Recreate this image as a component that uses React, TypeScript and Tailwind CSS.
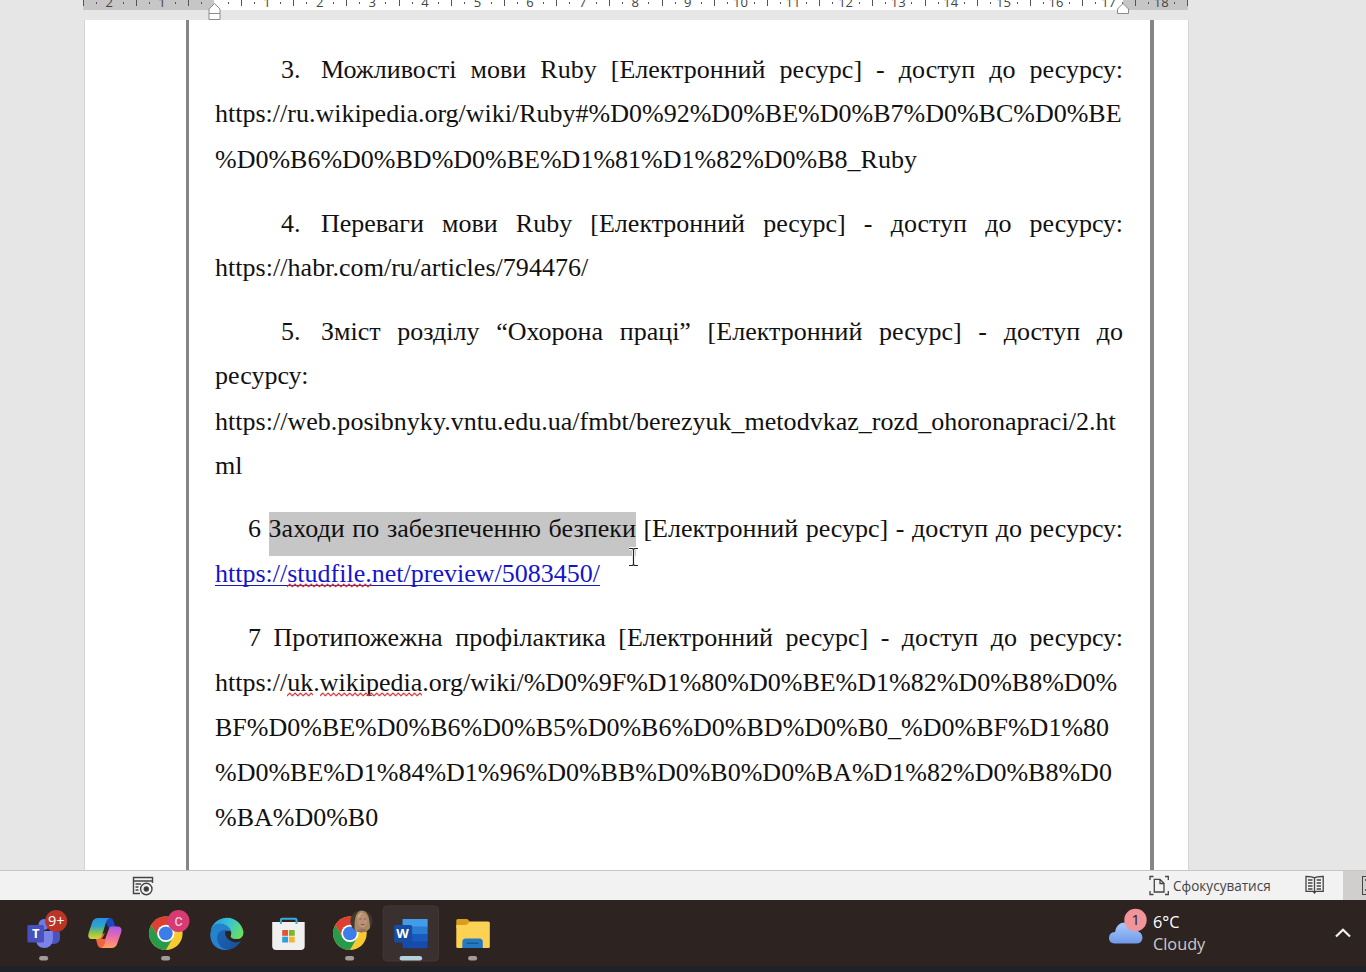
import type { ReactNode } from "react";

const rulerCells = Array.from({ length: 21 }, (_, i) => i - 2);

function Ruler() {
  return (
    <div className="relative ml-[83px] h-[10px] w-[1105px] overflow-hidden bg-[#c6c6c6]">
      <div className="ml-[131px] h-[10px] w-[909px] bg-white" />
      <div className="absolute left-0 top-0 flex h-[10px]">
        {rulerCells.map((n) => (
          <div key={n} className="relative flex w-[52.6px] shrink-0 justify-center">
            <i className="absolute left-0 top-0 h-[6px] w-px bg-[#555]" />
            <i className="absolute left-[13px] top-[2px] h-[2px] w-px bg-[#555]" />
            <i className="absolute left-[39.5px] top-[2px] h-[2px] w-px bg-[#555]" />
            <span className="-mt-[6px] font-['Open_Sans',sans-serif] text-[13px] leading-[17px] text-[#444]">
              {n === 0 ? "" : Math.abs(n)}
            </span>
          </div>
        ))}
      </div>
      <i className="absolute right-0 top-0 h-[6px] w-px bg-[#555]" />
    </div>
  );
}

function Squiggle({ children }: { children: ReactNode }) {
  return (
    <span className="relative inline-block">
      {children}
      <svg className="absolute left-0 top-[31.5px] h-[5px] w-full overflow-hidden">
        <defs>
          <pattern id="wave" width="5.4" height="5" patternUnits="userSpaceOnUse">
            <path d="M-1 4.7 L0 3.8 L2.7 1 L5.4 3.8 L6.4 4.7" fill="none" stroke="#cf3038" strokeWidth="1.2" />
          </pattern>
        </defs>
        <rect width="100%" height="5" fill="url(#wave)" />
      </svg>
    </span>
  );
}

function Line({ height = "h-[45px]", children }: { height?: string; children: ReactNode }) {
  return <div className={`${height} whitespace-nowrap`}>{children}</div>;
}

function Numbered({ n, children }: { n: string; children: ReactNode }) {
  return (
    <div className="flex h-[44px] pl-[66px]">
      <span className="w-[40px] shrink-0">{n}</span>
      <span className="grow [text-align-last:justify]">{children}</span>
    </div>
  );
}

function Indented({ children }: { children: ReactNode }) {
  return <div className="h-[45px] pl-[33px] [text-align-last:justify]">{children}</div>;
}

function Cell({ index, active, children }: { index: number; active?: boolean; children: ReactNode }) {
  const x = 12.6 + 61.3 * index;
  const cx = x + 30.65;
  return (
    <svg className="h-[66px] w-[61.3px] shrink-0" viewBox={`${x} 900 61.3 66`}>
      {active && <rect x="383.5" y="906" width="55.5" height="55" rx="4" fill="#3a302f" stroke="#423837" />}
      {children}
      {active && <rect x="400" y="956" width="22.5" height="4.4" rx="2.2" fill="#b4d2dc" />}
      {!active && [0, 2, 5, 7].includes(index) && (
        <rect x={cx - 4.5} y="956" width="9" height="4.4" rx="2.2" fill="#a39b99" />
      )}
    </svg>
  );
}

function Chrome({ cx }: { cx: number }) {
  return (
    <g transform={`translate(${cx} 933.3)`}>
      <circle r="16.8" fill="#f9c930" />
      <path d="M-14.55 -8.4 A16.8 16.8 0 0 1 14.55 -8.4 L0 -8.4 L-7.3 4.2 Z" fill="#db4033" />
      <path d="M-14.55 -8.4 A16.8 16.8 0 0 0 0 16.8 L7.3 4.2 L-7.3 4.2 Z" fill="#279a4b" />
      <circle r="8.6" fill="#fff" />
      <circle r="6.9" fill="#3d7de8" />
    </g>
  );
}

function Taskbar() {
  return (
    <div className="flex h-[66px] justify-between bg-[#2d2321] pl-[12.6px]">
      <div className="flex">
        <Cell index={0}>
          <circle cx="53" cy="928" r="4" fill="#5059c9" />
          <path d="M48 932 H59.5 V940 Q58 944 53 944 H48Z" fill="#4b53bc" />
          <circle cx="43.5" cy="924.5" r="5.4" fill="#6f7be0" />
          <path d="M35.5 931 H52.5 V940 Q51 948 44 948 Q36.5 948 35.5 940Z" fill="#7b83eb" />
          <rect x="27" y="925" width="16.6" height="17.4" rx="1.5" fill="#4850bd" />
          <text x="35.3" y="938.4" textAnchor="middle" fontFamily="Open Sans" fontWeight="700" fontSize="13" fill="#fff">T</text>
          <circle cx="55.8" cy="921" r="11" fill="#b83528" />
          <text x="55.9" y="926" textAnchor="middle" fontFamily="Open Sans" fontSize="14.5" fill="#fff">9+</text>
        </Cell>
        <Cell index={1}>
          <defs>
            <linearGradient id="cpL" x1="0" y1="0" x2="0" y2="1">
              <stop offset="0" stopColor="#278fe5" />
              <stop offset=".4" stopColor="#30a6c8" />
              <stop offset=".7" stopColor="#8cc44b" />
              <stop offset="1" stopColor="#ddd32f" />
            </linearGradient>
            <linearGradient id="cpR" x1=".4" y1="0" x2=".3" y2="1">
              <stop offset="0" stopColor="#b05be5" />
              <stop offset=".5" stopColor="#ed6fa5" />
              <stop offset="1" stopColor="#ffa45b" />
            </linearGradient>
          </defs>
          <path d="M104 918 H109.5 Q112.5 918 113.4 921 L115 926 H118 L109 929Z" fill="#1b49c2" />
          <path d="M95.5 938 L97.5 945 Q98.5 948 101.5 948 H105 L110 930Z" fill="#f0643f" />
          <path d="M98 918 H110 Q107 918.5 106 922 L102 935 Q100.8 939 97 939 H91.5 Q87.2 939 88.4 933.5 L92 922.5 Q93.5 918 98 918Z" fill="url(#cpL)" />
          <path d="M111.5 926.5 H117 Q122.6 926.5 121.2 932 L117 944 Q115.5 948 111.5 948 H101 Q103.5 947 104.5 944 L107.5 931 Q108.5 926.5 111.5 926.5Z" fill="url(#cpR)" />
          <path d="M107.2 927.5 H109.4 L105 939 H101.5 Q103 937 103.8 935Z" fill="#2d2321" />
        </Cell>
        <Cell index={2}>
          <Chrome cx={166} />
          <circle cx="178.7" cy="921" r="11" fill="#d63b72" />
          <text x="178.7" y="925.8" textAnchor="middle" fontFamily="Roboto" fontWeight="500" fontSize="12.5" fill="#f5c5d7">C</text>
        </Cell>
        <Cell index={3}>
          <defs>
            <linearGradient id="edTop" x1="0" y1=".2" x2="1" y2=".6">
              <stop offset="0" stopColor="#259bdc" />
              <stop offset=".5" stopColor="#39c4d3" />
              <stop offset="1" stopColor="#67df62" />
            </linearGradient>
            <linearGradient id="edBot" x1="0" y1="0" x2="1" y2="1">
              <stop offset="0" stopColor="#1d67b3" />
              <stop offset="1" stopColor="#164f9c" />
            </linearGradient>
          </defs>
          <path d="M211 931 A16.8 16.8 0 0 1 244 932 Q244 940 235.5 939 Q230 938.5 231.5 935 Q233 930 226 925.5 Q216 921 211 931Z" fill="url(#edTop)" />
          <path d="M210.7 934 Q212 923.5 220 923.5 Q229 923.5 231.5 931 Q220 929 220.5 938 Q221 948 234 947.8 Q229 950 225 950 Q211 948.5 210.7 934Z" fill="#2383ce" />
          <path d="M227 929.5 Q217 930 217.5 939 Q219 949 229 949.6 Q237 948.5 241.5 941 Q236 944 230.5 940.5 Q223 936 227 929.5Z" fill="url(#edBot)" />
        </Cell>
        <Cell index={4}>
          <path d="M272 922 H304.5 V946 Q304.5 950 300.5 950 H276 Q272 950 272 946Z" fill="#f1f0f0" />
          <path d="M280.7 924 V920 Q280.7 918.8 282 918.8 H295 Q296.3 918.8 296.3 920 V924" fill="none" stroke="#39aede" strokeWidth="2" />
          <rect x="282" y="930" width="5.8" height="5.8" fill="#e35635" />
          <rect x="288.7" y="930" width="5.8" height="5.8" fill="#7fb52d" />
          <rect x="282" y="936.7" width="5.8" height="5.8" fill="#2ba0df" />
          <rect x="288.7" y="936.7" width="5.8" height="5.8" fill="#f3b72f" />
        </Cell>
        <Cell index={5}>
          <Chrome cx={350} />
          <clipPath id="face"><circle cx="361.5" cy="921.3" r="11" /></clipPath>
          <g clipPath="url(#face)">
            <rect x="350" y="910" width="24" height="24" fill="#40392f" />
            <path d="M355 934 Q353 911 362 910.5 Q371 911 370 934Z" fill="#a78a65" />
            <ellipse cx="362.5" cy="920.5" rx="5" ry="7.3" fill="#bd9077" />
            <path d="M357.5 919 Q358 913 363 912.5 Q360 915 357.5 919Z" fill="#d2b987" />
            <path d="M359.5 919 H361.5 M364 919 H366 M361 924.5 H364.5" stroke="#795146" strokeWidth=".9" />
            <path d="M357 931 Q362 926 369 931 V934 H357Z" fill="#9b715c" />
          </g>
        </Cell>
        <Cell index={6} active>
          <rect x="403" y="919" width="25" height="29.3" rx="1.5" fill="#184aab" />
          <path d="M403 919 H428 V927 H403Z" fill="#429de9" />
          <path d="M403 926.5 H428 V934 H403Z" fill="#2b7bd3" />
          <path d="M403 934 H428 V941.5 H403Z" fill="#185abd" />
          <rect x="394.5" y="925" width="18" height="17.4" rx="1.5" fill="#174ca3" />
          <text x="402.9" y="938.4" textAnchor="middle" fontFamily="Open Sans" fontWeight="700" fontSize="13" fill="#fff">W</text>
        </Cell>
        <Cell index={7}>
          <path d="M456 920.5 Q456 919 457.5 919 H467 L470 922 V928 H456Z" fill="#d99d20" />
          <path d="M456 925 H466 L470 921.5 H488 Q489.5 921.5 489.5 923 V947 Q489.5 948 488 948 H457.5 Q456 948 456 947Z" fill="#fbd254" />
          <path d="M462 948 V942 Q462 938.5 465.5 938.5 H479 Q482.5 938.5 482.5 942 V948Z" fill="#2479c2" />
          <path d="M466.5 943.3 H478" stroke="#155891" strokeWidth="1.3" />
        </Cell>
      </div>
      <div className="flex font-['Open_Sans',sans-serif] text-[16.3px] leading-[22px]">
        <svg className="mt-[8px] h-[38px] w-[40px]" viewBox="1108 908 40 38">
          <defs>
            <linearGradient id="cloud" x1="0" y1="0" x2="0" y2="1">
              <stop offset="0" stopColor="#a8cafa" />
              <stop offset="1" stopColor="#709ae9" />
            </linearGradient>
          </defs>
          <path d="M1114.5 943.5 Q1109 943 1109 938 Q1109 932.5 1115 932 Q1116.5 922.5 1125 922.5 Q1133 922.5 1135 930.5 Q1142.5 931.5 1142.5 938 Q1142 943.5 1136 943.5Z" fill="url(#cloud)" />
          <circle cx="1135.5" cy="920" r="11.2" fill="#f1959a" />
          <text x="1135.7" y="925" textAnchor="middle" fontFamily="Open Sans" fontSize="14.5" fill="#291b1b">1</text>
        </svg>
        <div className="mr-[128px] mt-[11px] w-[58px] pl-[5px]">
          <div className="text-white">6°C</div>
          <div className="text-[#d0c9c7]">Cloudy</div>
        </div>
        <svg className="mr-[14px] mt-[27px] h-[12px] w-[18px]" viewBox="0 0 18 12" fill="none" stroke="#f4f1f0" strokeWidth="2.2">
          <path d="M2 9.5 L9 2.7 L16 9.5" />
        </svg>
      </div>
    </div>
  );
}

function StatusBar() {
  return (
    <div className="flex h-[30px] border-t border-[#c6c6c6] bg-[#f2f2f2]">
      <svg className="ml-[132px] mt-[5px] h-[20px] w-[22px] shrink-0" viewBox="132 876 22 20" fill="none" stroke="#444" strokeWidth="1.4">
        <path d="M140 893.5 H133.5 V877.5 H152.5 V883 M133.5 881 H152.5 M135.5 884 H141 M135.5 887 H138.5 M135.5 890 H138.5" />
        <circle cx="146.3" cy="889" r="5.7" fill="#f2f2f2" />
        <circle cx="146.3" cy="889" r="2" fill="#333" />
      </svg>
      <svg className="ml-[995px] mt-[4px] h-[22px] w-[21px] shrink-0" viewBox="1149 875 21 22" fill="none" stroke="#444" strokeWidth="1.3">
        <path d="M1153.5 876.5 H1150 V880 M1165 876.5 H1168.3 V880 M1150 891 V894.5 H1153.5 M1168.3 891 V894.5 H1165" />
        <path d="M1154.3 879.3 H1160 L1164 883.3 V892 H1154.3Z M1160 879.3 V883.5 H1164" />
      </svg>
      <span className="ml-[3px] w-[132px] shrink-0 pt-[6px] font-['Open_Sans',sans-serif] text-[13.55px] leading-[18px] text-[#444]">
        Сфокусуватися
      </span>
      <svg className="mt-[4px] h-[20px] w-[20px] shrink-0" viewBox="1305 875 20 20" fill="none" stroke="#444" strokeWidth="1.3">
        <path d="M1314.5 878 Q1312.5 876.4 1306 876.5 V891.3 H1313 L1314.5 893 L1316 891.3 H1323.2 V876.5 Q1316.5 876.4 1314.5 878 V892" />
        <path d="M1308 880 H1312.5 M1308 883 H1312.5 M1308 886 H1312.5 M1308 889 H1312.5 M1316.7 880 H1321 M1316.7 883 H1321 M1316.7 886 H1321 M1316.7 889 H1321" />
      </svg>
      <div className="ml-[18px] grow overflow-hidden bg-[#d1cfcd] pl-[19px] pt-[5px]">
        <div className="h-[19px] w-[14px] border-[1.5px] border-[#444] pl-[2px] pt-[2px]">
          <div className="h-[12px] w-[10px] border-y-2 border-[#666]" />
        </div>
      </div>
    </div>
  );
}

export default function App() {
  return (
    <div className="flex h-[972px] w-[1366px] flex-col overflow-hidden bg-[#e6e6e6]">
      <main className="relative h-[870px] shrink-0 overflow-hidden">
        <Ruler />
        <svg className="absolute left-[207px] top-[2px] h-[19px] w-[15px]" viewBox="0 0 15 19" fill="#fff" stroke="#8b8b8b">
          <path d="M2 11.5 V7 L7.5 1.5 L13 7 V11.5Z M2 11.5 H13 V17.5 H2Z" />
        </svg>
        <svg className="absolute left-[1115px] top-[2px] h-[13px] w-[15px]" viewBox="0 0 15 13" fill="#fff" stroke="#8b8b8b">
          <path d="M2.5 11.5 V7 L8 1.5 L13.5 7 V11.5Z" />
        </svg>

        <div className="ml-[84px] mt-[10px] flex h-[850px] w-[1105px] border-x border-[#d5d5d5] bg-white pl-[101px]">
          <article className="flex h-full w-[968px] flex-col gap-[19px] border-l-[3.5px] border-r-4 border-[#858585] pl-[26px] pr-[27px] pt-[27px] font-['Liberation_Serif',serif] text-[26px] leading-[45px] text-[#111]">
            <section>
              <Numbered n="3.">Можливості мови Ruby [Електронний ресурс] - доступ до ресурсу:</Numbered>
              <Line height="h-[46px]">https://ru.wikipedia.org/wiki/Ruby#%D0%92%D0%BE%D0%B7%D0%BC%D0%BE</Line>
              <Line>%D0%B6%D0%BD%D0%BE%D1%81%D1%82%D0%B8_Ruby</Line>
            </section>
            <section>
              <Numbered n="4.">Переваги мови Ruby [Електронний ресурс] - доступ до ресурсу:</Numbered>
              <Line><span className="tracking-[0.04px]">https://habr.com/ru/articles/794476/</span></Line>
            </section>
            <section className="-mb-px">
              <Numbered n="5.">Зміст розділу “Охорона праці” [Електронний ресурс] - доступ до</Numbered>
              <Line height="h-[46px]">ресурсу:</Line>
              <Line height="h-[44px]">
                <span className="tracking-[0.025px]">
                  https://web.posibnyky.vntu.edu.ua/fmbt/berezyuk_metodvkaz_rozd_ohoronapraci/2.ht
                </span>
              </Line>
              <Line>ml</Line>
            </section>
            <section>
              <Indented>
                6 <span className="bg-[#c6c6c6] pb-[13px] pt-[2px] tracking-[0.05px]">Заходи по забезпеченню безпеки</span> [Електронний ресурс] - доступ до ресурсу:
              </Indented>
              <Line>
                <span className="inline-block h-[35px] border-b border-[#1b1bb0] text-[#1414cc]">
                  https://<Squiggle>studfile.</Squiggle>net/preview/5083450/
                </span>
              </Line>
            </section>
            <section>
              <Indented>
                7 <span className="tracking-[0.05px]">Протипожежна профілактика</span> [Електронний ресурс] - доступ до ресурсу:
              </Indented>
              <Line>
                https://<Squiggle>uk</Squiggle>.<Squiggle>wikipedia</Squiggle>.org/wiki/%D0%9F%D1%80%D0%BE%D1%82%D0%B8%D0%
              </Line>
              <Line>BF%D0%BE%D0%B6%D0%B5%D0%B6%D0%BD%D0%B0_%D0%BF%D1%80</Line>
              <Line>%D0%BE%D1%84%D1%96%D0%BB%D0%B0%D0%BA%D1%82%D0%B8%D0</Line>
              <Line>%BA%D0%B0</Line>
            </section>
          </article>
        </div>

        <svg className="absolute left-[627px] top-[547px] h-[20px] w-[13px]" viewBox="0 0 13 20" fill="none">
          <path d="M2 1.5 H11 M2 18.5 H11 M6.5 1.5 V18.5" stroke="#fff" strokeWidth="3" />
          <path d="M2 1.5 H5.5 L6.5 2.5 L7.5 1.5 H11 M2 18.5 H5.5 L6.5 17.5 L7.5 18.5 H11 M6.5 2 V18" stroke="#222" strokeWidth="1.2" />
        </svg>
      </main>
      <StatusBar />
      <Taskbar />
      <div className="h-[6px] bg-[#1f2327]" />
    </div>
  );
}
